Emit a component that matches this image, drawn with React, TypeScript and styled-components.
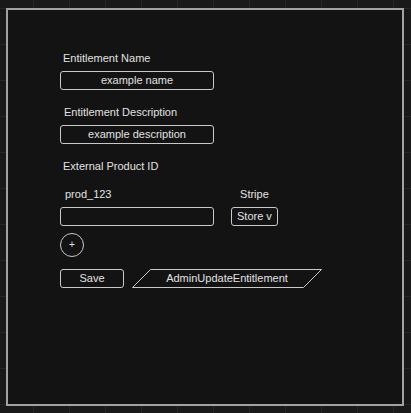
import React from "react";
import styled, { createGlobalStyle } from "styled-components";

const Global = createGlobalStyle`
  html, body {
    margin: 0;
    padding: 0;
  }
  body {
    width: 411px;
    height: 413px;
    overflow: hidden;
    background-color: #191919;
    background-image:
      linear-gradient(to right, #262626 1px, transparent 1px),
      linear-gradient(to bottom, #262626 1px, transparent 1px);
    background-size: 36px 36px;
    background-position: -3px 8px;
    font-family: "Liberation Sans", Arial, sans-serif;
  }
`;

const Frame = styled.div`
  box-sizing: border-box;
  margin: 8px 0 0 6px;
  width: 398px;
  height: 398px;
  border: 2px solid #a2a2a2;
  background: #131313;
  padding: 41px 0 0 52px;
  display: flex;
  flex-direction: column;
`;

const Field = styled.div<{ $mb?: number }>`
  display: flex;
  flex-direction: column;
  gap: 6px;
  margin-bottom: ${(p) => p.$mb ?? 15}px;
`;

const Label = styled.div<{ $indent?: number }>`
  color: #e2e2e2;
  font-size: 11px;
  line-height: 14px;
  padding-left: ${(p) => p.$indent ?? 3}px;
`;

const TextBox = styled.div`
  box-sizing: border-box;
  width: 154px;
  height: 19px;
  border: 1px solid #c9c9c9;
  border-radius: 3px;
  color: #e2e2e2;
  font-size: 11px;
  line-height: 17px;
  text-align: center;
`;

const ProductRow = styled.div`
  display: grid;
  grid-template-columns: 154px max-content;
  justify-content: start;
  column-gap: 17px;
  row-gap: 6px;
  align-items: center;
  justify-items: start;
  margin-top: 1px;
`;

const CenteredLabel = styled(Label)`
  justify-self: center;
  padding-left: 0;
`;

const SelectButton = styled.div`
  box-sizing: border-box;
  height: 19px;
  padding: 0 5px;
  border: 1px solid #c9c9c9;
  border-radius: 3px;
  color: #e2e2e2;
  font-size: 11px;
  line-height: 17px;
`;

const AddButton = styled.div`
  box-sizing: border-box;
  width: 24px;
  height: 24px;
  margin-top: 7px;
  border: 1px solid #c9c9c9;
  border-radius: 50%;
  color: #e2e2e2;
  font-size: 10px;
  line-height: 21px;
  text-align: center;
`;

const ActionRow = styled.div`
  display: flex;
  align-items: center;
  gap: 8px;
  margin-top: 12px;
`;

const SaveButton = styled.div`
  box-sizing: border-box;
  width: 64px;
  height: 19px;
  border: 1px solid #c9c9c9;
  border-radius: 3px;
  color: #e2e2e2;
  font-size: 11px;
  line-height: 17px;
  text-align: center;
`;

const ActionTag = styled.div`
  position: relative;
  width: 190px;
  height: 19px;
  color: #e2e2e2;
  font-size: 11px;
  line-height: 19px;
  text-align: center;
  svg {
    position: absolute;
    inset: 0;
  }
  span {
    position: relative;
  }
`;

export default function App() {
  return (
    <>
      <Global />
      <Frame>
        <Field>
          <Label>Entitlement Name</Label>
          <TextBox>example name</TextBox>
        </Field>
        <Field>
          <Label $indent={4}>Entitlement Description</Label>
          <TextBox>example description</TextBox>
        </Field>
        <Field $mb={13}>
          <Label>External Product ID</Label>
        </Field>
        <ProductRow>
          <Label $indent={5}>prod_123</Label>
          <CenteredLabel>Stripe</CenteredLabel>
          <TextBox />
          <SelectButton>Store v</SelectButton>
        </ProductRow>
        <AddButton>+</AddButton>
        <ActionRow>
          <SaveButton>Save</SaveButton>
          <ActionTag>
            <svg width="190" height="19" viewBox="0 0 190 19">
              <polygon
                points="18.5,0.5 189.5,0.5 171.5,18.5 0.5,18.5"
                fill="none"
                stroke="#c9c9c9"
                strokeWidth="1"
              />
            </svg>
            <span>AdminUpdateEntitlement</span>
          </ActionTag>
        </ActionRow>
      </Frame>
    </>
  );
}
